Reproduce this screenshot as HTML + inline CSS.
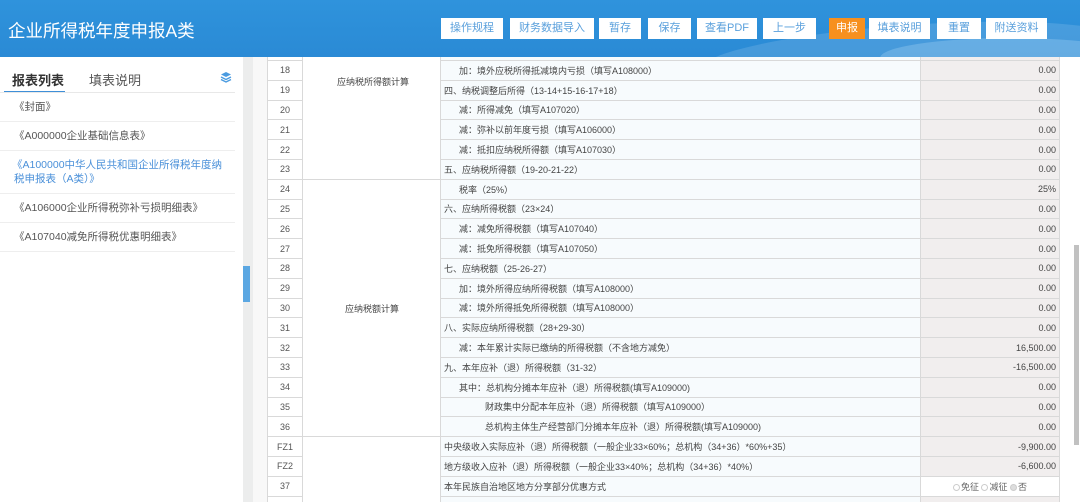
<!DOCTYPE html>
<html><head><meta charset="utf-8"><style>
*{margin:0;padding:0;box-sizing:border-box}
html,body{width:1080px;height:502px;overflow:hidden}
body{background:#fff;font-family:"Liberation Sans","Noto Sans CJK SC",sans-serif;position:relative}
#hd{position:absolute;left:0;top:0;width:1080px;height:57px;z-index:5;background:linear-gradient(180deg,#2f93dc 0%,#2a8ad5 100%);overflow:hidden}
#hd .deco{position:absolute;left:700px;top:25px;width:420px;height:60px;border-radius:50%;background:rgba(255,255,255,0.13);transform:rotate(-4deg)}
#hd .deco2{position:absolute;left:880px;top:38px;width:260px;height:40px;border-radius:50%;background:rgba(200,230,250,0.25)}
#hd h1{position:absolute;left:8px;top:18px;font-size:17.5px;font-weight:normal;color:#fff}
.b{position:absolute;top:18px;height:21px;background:#fff;color:#5aa0dc;font-size:11px;line-height:21px;text-align:center}
.b.o{background:#f7901e;color:#fff}
#lp{position:absolute;left:0;top:57px;width:243px;height:445px;background:#fff}
.tab{position:absolute;top:13px;font-size:13px;color:#555}
.li{position:absolute;left:0;width:235px;border-bottom:1px solid #eee;font-size:10.5px;color:#555;padding-left:14px;line-height:14px;white-space:nowrap}
#gut{position:absolute;left:243px;top:57px;width:10px;height:445px;background:#eceded}
#gut2{position:absolute;left:253px;top:57px;width:14px;height:445px;background:#f8f8f8}
#hdl{position:absolute;left:243px;top:266px;width:7px;height:36px;background:#5ba7e2}
#tb{position:absolute;left:267px;top:40.2px;border-collapse:collapse;table-layout:fixed;width:792px}
#tb td{height:19.8px;border:1px solid #d9d9d9;font-size:9px;color:#444;padding:0 3px;white-space:nowrap;overflow:hidden}
#tb td.n{text-align:center;color:#555;background:#fff}
#tb td.g{background:#fff}
#tb td.d{background:#f7fbfd}
#tb td.v{background:#f1eeee;text-align:right;padding-right:3px}
#tb td.w{background:#fff}
.i1{padding-left:18px!important}.i2{padding-left:44px!important}
.gl{position:absolute;font-size:9px;color:#444;z-index:2}
#sb{position:absolute;left:1074px;top:245px;width:5px;height:200px;background:#c1c1c1}
.r{display:inline-block;width:7px;height:7px;border-radius:50%;border:1px solid #ccc;vertical-align:-1px;margin-right:1px}
</style></head><body>
<div id="hd"><div class="deco"></div><div class="deco2"></div>
<h1>企业所得税年度申报A类</h1>
<div class="b" style="left:441px;width:62px">操作规程</div>
<div class="b" style="left:510px;width:84px">财务数据导入</div>
<div class="b" style="left:599px;width:42px">暂存</div>
<div class="b" style="left:648px;width:43px">保存</div>
<div class="b" style="left:697px;width:60px">查看PDF</div>
<div class="b" style="left:763px;width:53px">上一步</div>
<div class="b o" style="left:829px;width:36px">申报</div>
<div class="b" style="left:869px;width:61px">填表说明</div>
<div class="b" style="left:937px;width:44px">重置</div>
<div class="b" style="left:986px;width:61px">附送资料</div>
</div>
<div id="lp">
<div class="tab" style="left:12px;font-weight:bold;color:#333">报表列表</div>
<div class="tab" style="left:89px">填表说明</div>
<svg style="position:absolute;left:220px;top:14px" width="12" height="12" viewBox="0 0 12 12"><path d="M6 1L11 3.5 6 6 1 3.5Z" fill="#4a9be0"/><path d="M1 6L6 8.5 11 6" stroke="#4a9be0" fill="none" stroke-width="1.4"/><path d="M1 8.5L6 11 11 8.5" stroke="#4a9be0" fill="none" stroke-width="1.4"/></svg>
<div style="position:absolute;left:4px;top:34px;width:61px;height:2px;background:#3e8fd8"></div>
<div style="position:absolute;left:0;top:35px;width:235px;height:1px;background:#e8e8e8"></div>
<div class="li" style="top:36px;height:29px;padding-top:7px">《封面》</div>
<div class="li" style="top:65px;height:29px;padding-top:7px">《A000000企业基础信息表》</div>
<div class="li" style="top:94px;height:43px;padding-top:7px;color:#4a90d9;padding-left:12px">《A100000中华人民共和国企业所得税年度纳<br><span style="margin-left:2px">税申报表（A类）》</span></div>
<div class="li" style="top:137px;height:29px;padding-top:7px">《A106000企业所得税弥补亏损明细表》</div>
<div class="li" style="top:166px;height:29px;padding-top:7px">《A107040减免所得税优惠明细表》</div>
</div>
<div id="gut"></div><div id="gut2"></div><div id="hdl"></div>
<div class="gl" style="left:337px;top:75px">应纳税所得额计算</div>
<div class="gl" style="left:345px;top:302px">应纳税额计算</div>
<table id="tb">
<colgroup><col style="width:35px"><col style="width:138px"><col style="width:480px"><col style="width:139px"></colgroup>
<tr><td class="n">17</td><td class="g" rowspan="7"></td><td class="d"></td><td class="v">0.00</td></tr>
<tr><td class="n">18</td><td class="d i1">加：境外应税所得抵减境内亏损（填写A108000）</td><td class="v">0.00</td></tr>
<tr><td class="n">19</td><td class="d">四、纳税调整后所得（13-14+15-16-17+18）</td><td class="v">0.00</td></tr>
<tr><td class="n">20</td><td class="d i1">减：所得减免（填写A107020）</td><td class="v">0.00</td></tr>
<tr><td class="n">21</td><td class="d i1">减：弥补以前年度亏损（填写A106000）</td><td class="v">0.00</td></tr>
<tr><td class="n">22</td><td class="d i1">减：抵扣应纳税所得额（填写A107030）</td><td class="v">0.00</td></tr>
<tr><td class="n">23</td><td class="d">五、应纳税所得额（19-20-21-22）</td><td class="v">0.00</td></tr>
<tr><td class="n">24</td><td class="g" rowspan="13"></td><td class="d i1">税率（25%）</td><td class="v">25%</td></tr>
<tr><td class="n">25</td><td class="d">六、应纳所得税额（23×24）</td><td class="v">0.00</td></tr>
<tr><td class="n">26</td><td class="d i1">减：减免所得税额（填写A107040）</td><td class="v">0.00</td></tr>
<tr><td class="n">27</td><td class="d i1">减：抵免所得税额（填写A107050）</td><td class="v">0.00</td></tr>
<tr><td class="n">28</td><td class="d">七、应纳税额（25-26-27）</td><td class="v">0.00</td></tr>
<tr><td class="n">29</td><td class="d i1">加：境外所得应纳所得税额（填写A108000）</td><td class="v">0.00</td></tr>
<tr><td class="n">30</td><td class="d i1">减：境外所得抵免所得税额（填写A108000）</td><td class="v">0.00</td></tr>
<tr><td class="n">31</td><td class="d">八、实际应纳所得税额（28+29-30）</td><td class="v">0.00</td></tr>
<tr><td class="n">32</td><td class="d i1">减：本年累计实际已缴纳的所得税额（不含地方减免）</td><td class="v">16,500.00</td></tr>
<tr><td class="n">33</td><td class="d">九、本年应补（退）所得税额（31-32）</td><td class="v">-16,500.00</td></tr>
<tr><td class="n">34</td><td class="d i1">其中：总机构分摊本年应补（退）所得税额(填写A109000)</td><td class="v">0.00</td></tr>
<tr><td class="n">35</td><td class="d i2">财政集中分配本年应补（退）所得税额（填写A109000）</td><td class="v">0.00</td></tr>
<tr><td class="n">36</td><td class="d i2">总机构主体生产经营部门分摊本年应补（退）所得税额(填写A109000)</td><td class="v">0.00</td></tr>
<tr><td class="n">FZ1</td><td class="g" rowspan="4"></td><td class="d">中央级收入实际应补（退）所得税额（一般企业33×60%；总机构（34+36）*60%+35）</td><td class="v">-9,900.00</td></tr>
<tr><td class="n">FZ2</td><td class="d">地方级收入应补（退）所得税额（一般企业33×40%；总机构（34+36）*40%）</td><td class="v">-6,600.00</td></tr>
<tr><td class="n">37</td><td class="d">本年民族自治地区地方分享部分优惠方式</td><td class="w" style="text-align:center;color:#666"><span class="r"></span>免征 <span class="r"></span>减征 <span class="r" style="background:#ddd"></span>否</td></tr>
<tr><td class="n"></td><td class="d"></td><td class="v"></td></tr>
</table>
<div id="sb"></div>
</body></html>
